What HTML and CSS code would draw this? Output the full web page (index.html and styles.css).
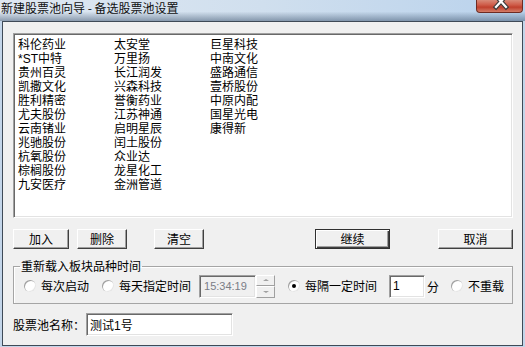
FILE: index.html
```html
<!DOCTYPE html>
<html lang="zh-CN">
<head>
    <meta charset="UTF-8">
    <meta name="viewport" content="width=device-width, initial-scale=1.0">
    <title>新建股票池向导 - 备选股票池设置</title>
    <link rel="stylesheet" href="styles.css">
</head>
<body>
    <div class="window">
        <div class="titlebar">
            <span class="title">新建股票池向导 - 备选股票池设置</span>
            <span class="close-btn">
                <svg width="45" height="12" viewBox="0 0 45 12">
                    <path d="M19 -4 L29 7 M29 -4 L19 7" stroke="#3b3b3b" stroke-width="4.5" stroke-linecap="square" fill="none"/>
                    <path d="M19 -4 L29 7 M29 -4 L19 7" stroke="#fff" stroke-width="2.2" stroke-linecap="square" fill="none"/>
                </svg>
            </span>
        </div>

        <div class="client">
            <div class="listbox">
                <div class="stock-grid">
                    <span>科伦药业</span>
                    <span><span class="latin">*ST</span>中特</span>
                    <span>贵州百灵</span>
                    <span>凯撒文化</span>
                    <span>胜利精密</span>
                    <span>尤夫股份</span>
                    <span>云南锗业</span>
                    <span>兆驰股份</span>
                    <span>杭氧股份</span>
                    <span>棕榈股份</span>
                    <span>九安医疗</span>

                    <span>太安堂</span>
                    <span>万里扬</span>
                    <span>长江润发</span>
                    <span>兴森科技</span>
                    <span>誉衡药业</span>
                    <span>江苏神通</span>
                    <span>启明星辰</span>
                    <span>闰土股份</span>
                    <span>众业达</span>
                    <span>龙星化工</span>
                    <span>金洲管道</span>

                    <span>巨星科技</span>
                    <span>中南文化</span>
                    <span>盛路通信</span>
                    <span>壹桥股份</span>
                    <span>中原内配</span>
                    <span>国星光电</span>
                    <span>康得新</span>
                </div>
            </div>

            <div class="button-row">
                <button class="btn btn-add">加入</button>
                <button class="btn btn-del">删除</button>
                <button class="btn btn-clear">清空</button>
                <button class="btn btn-default btn-next">继续</button>
                <button class="btn btn-cancel">取消</button>
            </div>

            <fieldset class="reload-group">
                <legend>重新载入板块品种时间</legend>
                <div class="reload-row">
                    <label class="radio radio-first"><span class="radio-dot"></span>每次启动</label>
                    <label class="radio radio-daily"><span class="radio-dot"></span>每天指定时间</label>
                    <div class="time-box">
                        <span class="time-field">15:34:19</span>
                        <span class="spinner">
                            <span class="spin-btn spin-up"></span>
                            <span class="spin-btn spin-down"></span>
                        </span>
                    </div>
                    <label class="radio radio-interval"><span class="radio-dot checked"></span>每隔一定时间</label>
                    <span class="text-field minutes">1</span>
                    <span class="unit">分</span>
                    <label class="radio radio-none"><span class="radio-dot"></span>不重载</label>
                </div>
            </fieldset>

            <div class="name-row">
                <span class="name-label">股票池名称：</span>
                <span class="text-field pool-name">测试<span class="latin">1</span>号</span>
            </div>
        </div>
    </div>
</body>
</html>
```

FILE: styles.css
```css
body {
    margin: 0;
    font-family: "Noto Sans CJK SC", sans-serif;
    font-size: 12px;
    color: #000;
}
.window {
    width: 525px;
    height: 347px;
    display: flex;
    flex-direction: column;
    background: #c3d5e9;
    overflow: hidden;
}
.titlebar {
    height: 21px;
    display: flex;
    justify-content: space-between;
    align-items: flex-start;
    background:
        linear-gradient(to bottom, rgba(255, 255, 255, 0) 55%, rgba(70, 92, 118, 0.55) 100%),
        linear-gradient(to right, #dfe8f2, #d0dfee 50%, #b9d2ec);
}
.title {
    padding-left: 1px;
    line-height: 16px;
    color: #111;
}
.close-btn {
    width: 45px;
    height: 12px;
    margin-right: 2px;
    border: 1px solid #6e2b22;
    border-top: none;
    border-radius: 0 0 4px 4px;
    background: linear-gradient(to bottom, #d88a78, #cf5d4a 40%, #c0402d 60%, #d47d68);
    display: flex;
}
.client {
    flex: 1;
    margin: 0 2px 1px 2px;
    border: 1px solid #3f4a57;
    background: #f0f0f0;
    padding: 11px 9px 0 10px;
}
.listbox {
    height: 179px;
    border: 1px solid;
    border-color: #a0a0a0 #fff #fff #a0a0a0;
    box-shadow: inset 1px 1px #696969, inset -1px -1px #e3e3e3;
    background: #fff;
    padding: 2px 2px 2px 4px;
}
.stock-grid {
    display: grid;
    grid-auto-flow: column;
    grid-template-rows: repeat(11, 14px);
    grid-template-columns: repeat(3, 96px);
    padding-top: 1px;
    line-height: 14px;
}
.latin {
    font-family: "Liberation Sans", sans-serif;
}
.button-row {
    display: flex;
    margin-top: 11px;
}
.btn {
    height: 20px;
    padding: 0;
    font-family: inherit;
    font-size: 12px;
    color: #000;
    background: #f0f0f0;
    border: 1px solid;
    border-color: #fff #404040 #404040 #fff;
    box-shadow: inset -1px -1px #a0a0a0;
    line-height: 16px;
}
.btn-default {
    border-color: #303030;
    box-shadow: inset 1px 1px #fff, inset -1px -1px #404040, inset -2px -2px #a0a0a0;
}
.btn-add { width: 56px; }
.btn-del { width: 50px; margin-left: 8px; }
.btn-clear { width: 50px; margin-left: 27px; }
.btn-next { width: 75px; margin-left: 111px; }
.btn-cancel { width: 75px; margin-left: 48px; }
.reload-group {
    margin: 10px 0 0 0;
    padding: 1px 0 5px 0;
    border: 1px solid #a5a5a5;
    box-shadow: inset 1px 1px #fff;
    min-width: 0;
}
.reload-group legend {
    margin-left: 6px;
    padding: 0 1px;
    line-height: 14px;
}
.reload-row {
    display: flex;
    align-items: center;
    height: 24px;
}
.radio {
    display: flex;
    align-items: center;
    gap: 5px;
    line-height: 14px;
}
.radio-dot {
    width: 12px;
    height: 12px;
    border-radius: 50%;
    background: #fff;
    box-shadow: inset 1px 1px #a0a0a0, inset -1px -1px #e6e6e6;
    display: flex;
    align-items: center;
    justify-content: center;
}
.radio-dot.checked::after {
    content: "";
    width: 4px;
    height: 4px;
    border-radius: 50%;
    background: #000;
}
.radio-first { margin-left: 10px; }
.radio-daily { margin-left: 13px; }
.radio-interval { margin-left: 13px; }
.radio-none { margin-left: 12px; }
.time-box {
    display: flex;
    margin-left: 8px;
    height: 23px;
}
.time-field {
    width: 51px;
    border: 1px solid;
    border-color: #a0a0a0 #fff #fff #a0a0a0;
    box-shadow: inset 1px 1px #696969, inset -1px -1px #e3e3e3;
    font-family: "Liberation Sans", sans-serif;
    font-size: 11px;
    color: #7a7d86;
    line-height: 21px;
    padding-left: 4px;
}
.spinner {
    display: flex;
    flex-direction: column;
    width: 19px;
}
.spin-btn {
    flex: 1;
    border: 1px solid;
    border-color: #fff #a0a0a0 #a0a0a0 #fff;
    background: #f0f0f0;
    display: flex;
    align-items: center;
    justify-content: center;
}
.spin-up::after {
    content: "";
    border: 3px solid transparent;
    border-top: none;
    border-bottom: 2px solid #a0a0a0;
}
.spin-down::after {
    content: "";
    border: 3px solid transparent;
    border-bottom: none;
    border-top: 2px solid #a0a0a0;
}
.text-field {
    display: block;
    background: #fff;
    border: 1px solid;
    border-color: #a0a0a0 #fff #fff #a0a0a0;
    box-shadow: inset 1px 1px #696969, inset -1px -1px #e3e3e3;
    box-sizing: border-box;
    padding-left: 3px;
}
.minutes {
    width: 36px;
    height: 23px;
    margin-left: 12px;
    font-family: "Liberation Sans", sans-serif;
    line-height: 21px;
}
.unit {
    margin-left: 2px;
}
.name-row {
    display: flex;
    align-items: center;
    margin-top: 9px;
}
.name-label {
    width: 73px;
}
.pool-name {
    width: 147px;
    height: 23px;
    line-height: 21px;
}
```
